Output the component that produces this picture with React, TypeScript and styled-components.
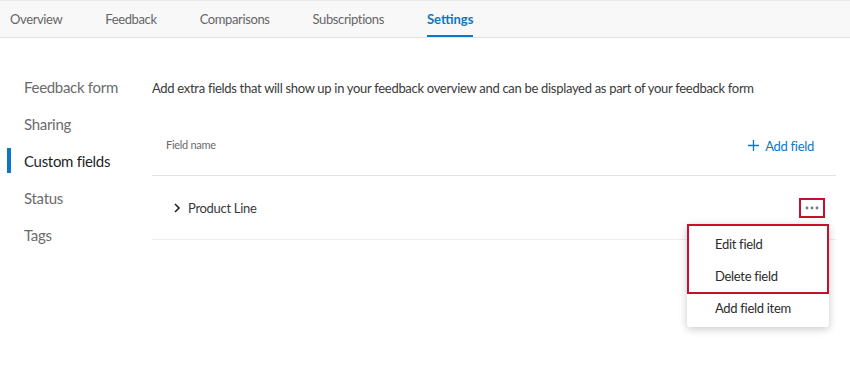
import React from "react";
import styled, { createGlobalStyle } from "styled-components";

const GlobalStyle = createGlobalStyle`
  *, *::before, *::after { box-sizing: border-box; margin: 0; padding: 0; }
  body {
    margin: 0;
    background: #fff;
    font-family: Lato, "Open Sans", Arial, sans-serif;
    color: #333;
    letter-spacing: -0.3px;
  }
`;

const Page = styled.div`
  width: 850px;
  height: 378px;
  overflow: hidden;
`;

const TabBar = styled.nav`
  display: flex;
  height: 38px;
  background: #f8f8f8;
  border-top: 1px solid #ececec;
  border-bottom: 1px solid #e3e3e3;
  padding-left: 10px;
  gap: 43px;
`;

const Tab = styled.div<{ $active?: boolean }>`
  position: relative;
  display: flex;
  align-items: center;
  font-size: 13px;
  letter-spacing: ${(p) => (p.$active ? "0" : "-0.38px")};
  color: ${(p) => (p.$active ? "#0b78c7" : "#666")};
  font-weight: ${(p) => (p.$active ? 700 : 400)};

  &::after {
    content: "";
    display: ${(p) => (p.$active ? "block" : "none")};
    position: absolute;
    left: 0;
    right: 0;
    bottom: 0;
    height: 2px;
    background: #0b78c7;
  }
`;

const Body = styled.div`
  display: flex;
`;

const Sidebar = styled.aside`
  width: 152px;
  padding-top: 30px;
  display: flex;
  flex-direction: column;
`;

const SideItem = styled.div<{ $active?: boolean }>`
  position: relative;
  height: 37px;
  display: flex;
  align-items: center;
  padding-left: 24px;
  font-size: 15px;
  color: ${(p) => (p.$active ? "#1f1f1f" : "#6b6b6b")};

  &::before {
    content: "";
    display: ${(p) => (p.$active ? "block" : "none")};
    position: absolute;
    left: 7px;
    top: 6px;
    bottom: 6px;
    width: 4px;
    background: #0b78c7;
  }
`;

const Main = styled.main`
  width: 684px;
  padding-top: 41px;
`;

const Description = styled.p`
  font-size: 13px;
  color: #3a3a3a;
  line-height: 18px;
`;

const HeaderRow = styled.div`
  display: flex;
  align-items: center;
  justify-content: space-between;
  height: 62px;
  margin-top: 17px;
  padding: 0 22px 0 14px;
  border-bottom: 1px solid #e2e2e2;
`;

const HeaderLabel = styled.span`
  font-size: 11px;
  color: #6b6b6b;
`;

const AddButton = styled.button`
  display: flex;
  align-items: center;
  gap: 6px;
  border: none;
  background: none;
  font-family: inherit;
  letter-spacing: inherit;
  font-size: 13px;
  color: #0b78c7;
  cursor: pointer;
  margin-top: 2px;
`;

const FieldRow = styled.div`
  position: relative;
  display: flex;
  align-items: center;
  justify-content: space-between;
  height: 64px;
  padding: 0 11px 0 21px;
  border-bottom: 1px solid #ececec;
`;

const FieldName = styled.div`
  display: flex;
  align-items: center;
  gap: 7px;
  font-size: 13px;
  color: #3a3a3a;
`;

const MoreButton = styled.button`
  width: 26px;
  height: 20px;
  display: flex;
  align-items: center;
  justify-content: center;
  border: 2px solid #c8102e;
  background: #fff;
  cursor: pointer;
`;

const Menu = styled.div`
  position: absolute;
  right: 7px;
  top: 48px;
  width: 142px;
  background: #fff;
  border-radius: 3px;
  box-shadow: 0 2px 8px rgba(0, 0, 0, 0.22);
  padding-bottom: 3px;
  z-index: 2;
`;

const Highlight = styled.div`
  border: 2px solid #c8102e;
  padding-top: 2px;
  margin-bottom: -2px;
`;

const MenuItem = styled.div<{ $boxed?: boolean }>`
  height: 32px;
  display: flex;
  align-items: center;
  padding-left: ${(p) => (p.$boxed ? "26px" : "28px")};
  font-size: 13px;
  color: #2b2b2b;
`;

const Chevron = () => (
  <svg width="8" height="10" viewBox="0 0 8 10">
    <path d="M2 1l4 4-4 4" fill="none" stroke="#222" strokeWidth="1.6" />
  </svg>
);

const Plus = () => (
  <svg width="11" height="11" viewBox="0 0 11 11">
    <path d="M5.5 0v11M0 5.5h11" stroke="#0b78c7" strokeWidth="1.3" />
  </svg>
);

const Dots = () => (
  <svg width="14" height="4" viewBox="0 0 14 4">
    <circle cx="2" cy="2" r="1.4" fill="#777" />
    <circle cx="7" cy="2" r="1.4" fill="#777" />
    <circle cx="12" cy="2" r="1.4" fill="#777" />
  </svg>
);

const tabs = ["Overview", "Feedback", "Comparisons", "Subscriptions", "Settings"];
const sideItems = ["Feedback form", "Sharing", "Custom fields", "Status", "Tags"];

const App = () => {
  return (
    <Page>
      <GlobalStyle />
      <TabBar>
        {tabs.map((t) => (
          <Tab key={t} $active={t === "Settings"}>
            {t}
          </Tab>
        ))}
      </TabBar>
      <Body>
        <Sidebar>
          {sideItems.map((s) => (
            <SideItem key={s} $active={s === "Custom fields"}>
              {s}
            </SideItem>
          ))}
        </Sidebar>
        <Main>
          <Description>
            Add extra fields that will show up in your feedback overview and can be displayed as
            part of your feedback form
          </Description>
          <HeaderRow>
            <HeaderLabel>Field name</HeaderLabel>
            <AddButton>
              <Plus />
              Add field
            </AddButton>
          </HeaderRow>
          <FieldRow>
            <FieldName>
              <Chevron />
              Product Line
            </FieldName>
            <MoreButton>
              <Dots />
            </MoreButton>
            <Menu>
              <Highlight>
                <MenuItem $boxed>Edit field</MenuItem>
                <MenuItem $boxed>Delete field</MenuItem>
              </Highlight>
              <MenuItem>Add field item</MenuItem>
            </Menu>
          </FieldRow>
        </Main>
      </Body>
    </Page>
  );
};

export default App;
